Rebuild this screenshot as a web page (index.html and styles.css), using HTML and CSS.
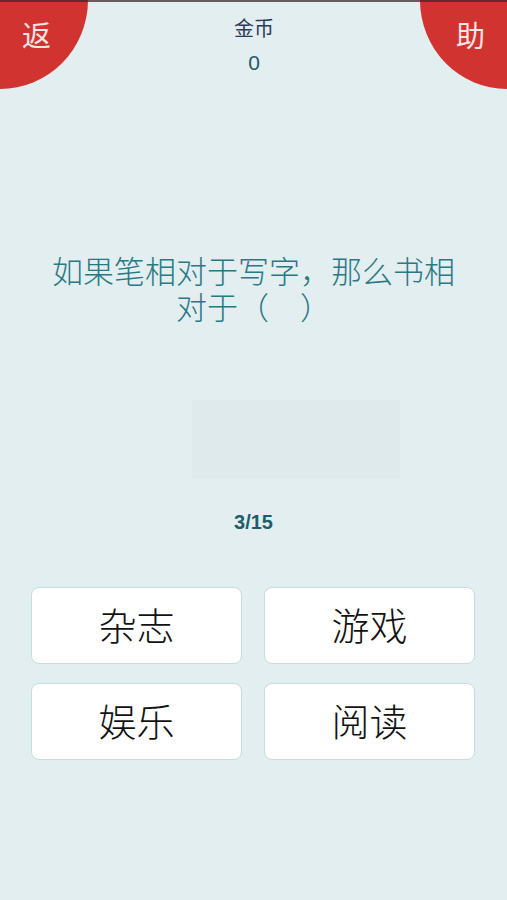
FILE: index.html
```html
<!DOCTYPE html>
<html>
<head>
<meta charset="UTF-8">
<title>答题</title>
<link rel="stylesheet" href="styles.css">
</head>
<body>
<div class="topline"></div>
<!-- 顶部：返回 / 金币 / 帮助 -->
<div class="header">
  <div class="corner left"><span>返</span></div>
  <div class="coins">
    <div class="coins-label">金币</div>
    <div class="coins-num">0</div>
  </div>
  <div class="corner right"><span>助</span></div>
</div>
<!-- 题目 -->
<div class="question">如果笔相对于写字，那么书相对于（　）</div>
<div class="picture"></div>
<div class="progress">3/15</div>
<!-- 选项 -->
<div class="answers">
  <div class="answer">杂志</div>
  <div class="answer">游戏</div>
  <div class="answer">娱乐</div>
  <div class="answer">阅读</div>
</div>
</body>
</html>
```

FILE: styles.css
```css
html, body {
	margin: 0;
	padding: 0;
}
body {
	width: 507px;
	height: 900px;
	background-color: #e2eef0;
	font-family: "Noto Sans CJK SC", "Noto Sans", sans-serif;
	position: relative;
	overflow: hidden;
}
.topline {
	position: absolute;
	left: 0;
	top: 0;
	width: 100%;
	height: 2px;
	background-color: rgba(60, 40, 40, 0.75);
	z-index: 2;
}
.header {
	display: flex;
	justify-content: space-between;
	height: 89px;
}
.corner {
	width: 88px;
	height: 89px;
	background-color: #d13330;
	color: #f8e4e4;
	font-size: 29px;
	display: flex;
	align-items: flex-start;
}
.corner span {
	margin-top: 15px;
	line-height: 38px;
}
.corner.left {
	border-bottom-right-radius: 100%;
}
.corner.left span {
	margin-left: 22px;
}
.corner.right {
	width: 87px;
	border-bottom-left-radius: 100%;
	justify-content: flex-end;
}
.corner.right span {
	margin-right: 22px;
}
.coins {
	text-align: center;
	padding-top: 15px;
}
.coins-label {
	font-size: 20px;
	line-height: 26px;
	color: #2c3b55;
}
.coins-num {
	font-size: 21px;
	line-height: 30px;
	margin-top: 7px;
	color: #1d5a64;
	font-family: "Liberation Sans", sans-serif;
}
.question {
	margin: 163px 45px 0 45px;
	text-align: center;
	font-size: 31px;
	font-weight: 300;
	line-height: 36px;
	color: #2b7884;
}
.picture {
	margin: 76px 0 0 192px;
	width: 208px;
	height: 79px;
	background-color: #dfeaec;
}
.progress {
	margin-top: 31px;
	text-align: center;
	font-family: "Liberation Sans", sans-serif;
	font-weight: bold;
	font-size: 20px;
	line-height: 24px;
	color: #1e5c6c;
}
.answers {
	display: grid;
	grid-template-columns: 211px 211px;
	grid-auto-rows: 77px;
	column-gap: 22px;
	row-gap: 19px;
	margin-top: 53px;
	padding: 0 31px;
}
.answer {
	box-sizing: border-box;
	padding-bottom: 4px;
	background-color: #fff;
	border: 1px solid #c8dcdf;
	border-radius: 8px;
	display: flex;
	align-items: center;
	justify-content: center;
	font-size: 38px;
	font-weight: 300;
	color: #111;
}
```
